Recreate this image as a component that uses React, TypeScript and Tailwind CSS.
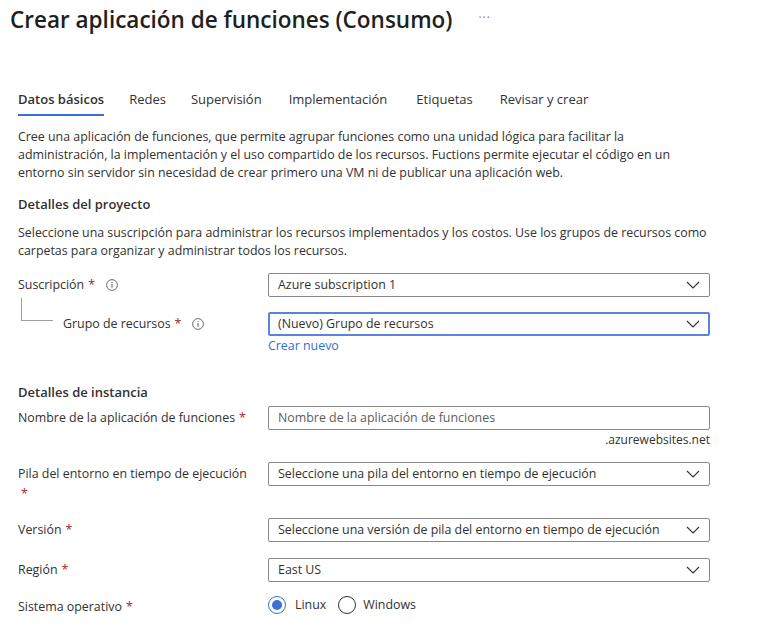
import React from "react";

const font = { fontFamily: '"Open Sans", "Noto Sans", sans-serif' };

function Chevron() {
  return (
    <svg width="14" height="8" viewBox="0 0 14 8" className="shrink-0">
      <path d="M1 1 L7 7 L13 1" fill="none" stroke="#323130" strokeWidth="1.1" />
    </svg>
  );
}

function Info() {
  return (
    <svg width="12" height="12" viewBox="0 0 12 12" className="shrink-0">
      <circle cx="6" cy="6" r="5.4" fill="none" stroke="#605e5c" strokeWidth="0.9" />
      <rect x="5.5" y="5" width="1" height="3.6" fill="#605e5c" />
      <circle cx="6" cy="3.5" r="0.6" fill="#605e5c" />
    </svg>
  );
}

function Star() {
  return <span className="text-[#a4262c] ml-[4px]">*</span>;
}

function Select({ text, focused }: { text: string; focused?: boolean }) {
  return (
    <div
      className={`h-[24px] w-[442px] shrink-0 flex items-center justify-between rounded-[2px] ${
        focused ? "border-2 border-[#5b83de] pl-[8px] pr-[8px]" : "border border-[#8a8886] pl-[9px] pr-[9px]"
      }`}
    >
      <span className="text-[#323130] whitespace-nowrap">{text}</span>
      <Chevron />
    </div>
  );
}

const tabs: { t: string; ml: string }[] = [
  { t: "Datos básicos", ml: "ml-0" },
  { t: "Redes", ml: "ml-[25px]" },
  { t: "Supervisión", ml: "ml-[25px]" },
  { t: "Implementación", ml: "ml-[27px]" },
  { t: "Etiquetas", ml: "ml-[29px]" },
  { t: "Revisar y crear", ml: "ml-[27px]" },
];

export default function App() {
  return (
    <div className="w-[763px] h-[626px] bg-white text-[#323130] overflow-hidden text-[12.4px]" style={font}>
      <div className="flex items-center pl-[10px] h-[40px]">
        <h1 className="text-[22.5px] font-semibold leading-[30px] text-[#201f1e] whitespace-nowrap">
          Crear aplicación de funciones (Consumo)
        </h1>
        <span className="ml-[26px] text-[#8a8886] text-[12px] tracking-[1px] -mt-[4px]">···</span>
      </div>

      <div className="flex pl-[18px] mt-[49px] text-[13px]">
        {tabs.map((x, i) => (
          <div key={x.t} className={`flex flex-col ${x.ml}`}>
            <span className={`leading-[20px] whitespace-nowrap ${i === 0 ? "font-semibold" : ""}`}>{x.t}</span>
            <div className={`h-[2px] mt-[5px] ${i === 0 ? "bg-[#3a6fd6]" : ""}`} />
          </div>
        ))}
      </div>

      <div className="px-[18px] pt-[12px] leading-[18px]">
        <p className="whitespace-nowrap">
          Cree una aplicación de funciones, que permite agrupar funciones como una unidad lógica para facilitar la
          <br />
          administración, la implementación y el uso compartido de los recursos. Fuctions permite ejecutar el código en un
          <br />
          entorno sin servidor sin necesidad de crear primero una VM ni de publicar una aplicación web.
        </p>
        <h2 className="text-[13px] font-semibold mt-[13px]">Detalles del proyecto</h2>
        <p className="mt-[11px] whitespace-nowrap">
          Seleccione una suscripción para administrar los recursos implementados y los costos. Use los grupos de recursos como
          <br />
          carpetas para organizar y administrar todos los recursos.
        </p>
      </div>

      <div className="pl-[18px] mt-[13px]">
        <div className="flex items-center h-[24px]">
          <div className="w-[250px] flex items-center">
            <span>Suscripción</span>
            <Star />
            <span className="ml-[11px]">
              <Info />
            </span>
          </div>
          <Select text="Azure subscription 1" />
        </div>

        <div className="flex mt-[15px]">
          <div className="w-[250px] flex items-start">
            <div className="w-[32px] ml-[3px] h-[23px] -mt-[14px] border-l border-b border-[#a19f9d] shrink-0 mr-[10px]" />
            <div className="flex items-center h-[24px]">
              <span>Grupo de recursos</span>
              <Star />
              <span className="ml-[11px]">
                <Info />
              </span>
            </div>
          </div>
          <div className="flex flex-col">
            <Select text="(Nuevo) Grupo de recursos" focused />
            <span className="text-[#2f6fd0] leading-[18px] mt-[1px]">Crear nuevo</span>
          </div>
        </div>

        <h2 className="text-[13px] font-semibold leading-[18px] mt-[28px]">Detalles de instancia</h2>

        <div className="flex items-center h-[24px] mt-[5px]">
          <div className="w-[250px] flex items-center">
            <span>Nombre de la aplicación de funciones</span>
            <Star />
          </div>
          <div className="h-[24px] w-[442px] border border-[#8a8886] rounded-[2px] flex items-center pl-[9px]">
            <span className="text-[#605e5c]">Nombre de la aplicación de funciones</span>
          </div>
        </div>
        <div className="w-[692px] text-right text-[12px] leading-[18px] mt-[1px]">.azurewebsites.net</div>

        <div className="flex items-start h-[24px] mt-[13px]">
          <div className="w-[250px] leading-[20px] pt-[2px]">
            Pila del entorno en tiempo de ejecución
            <br />
            <span className="text-[#a4262c] ml-[3px]">*</span>
          </div>
          <Select text="Seleccione una pila del entorno en tiempo de ejecución" />
        </div>

        <div className="flex items-center h-[24px] mt-[32px]">
          <div className="w-[250px] flex items-center">
            <span>Versión</span>
            <Star />
          </div>
          <Select text="Seleccione una versión de pila del entorno en tiempo de ejecución" />
        </div>

        <div className="flex items-center h-[24px] mt-[16px]">
          <div className="w-[250px] flex items-center">
            <span>Región</span>
            <Star />
          </div>
          <Select text="East US" />
        </div>

        <div className="flex items-center h-[18px] mt-[14px]">
          <div className="w-[250px] flex items-center pt-[5px]">
            <span>Sistema operativo</span>
            <Star />
          </div>
          <div className="flex items-center">
            <span className="w-[18px] h-[18px] rounded-full border border-[#3a6fd6] flex items-center justify-center">
              <span className="w-[10px] h-[10px] rounded-full bg-[#3a6fd6]" />
            </span>
            <span className="ml-[9px]">Linux</span>
            <span className="ml-[12px] w-[18px] h-[18px] rounded-full border border-[#323130]" />
            <span className="ml-[7px]">Windows</span>
          </div>
        </div>
      </div>
    </div>
  );
}
